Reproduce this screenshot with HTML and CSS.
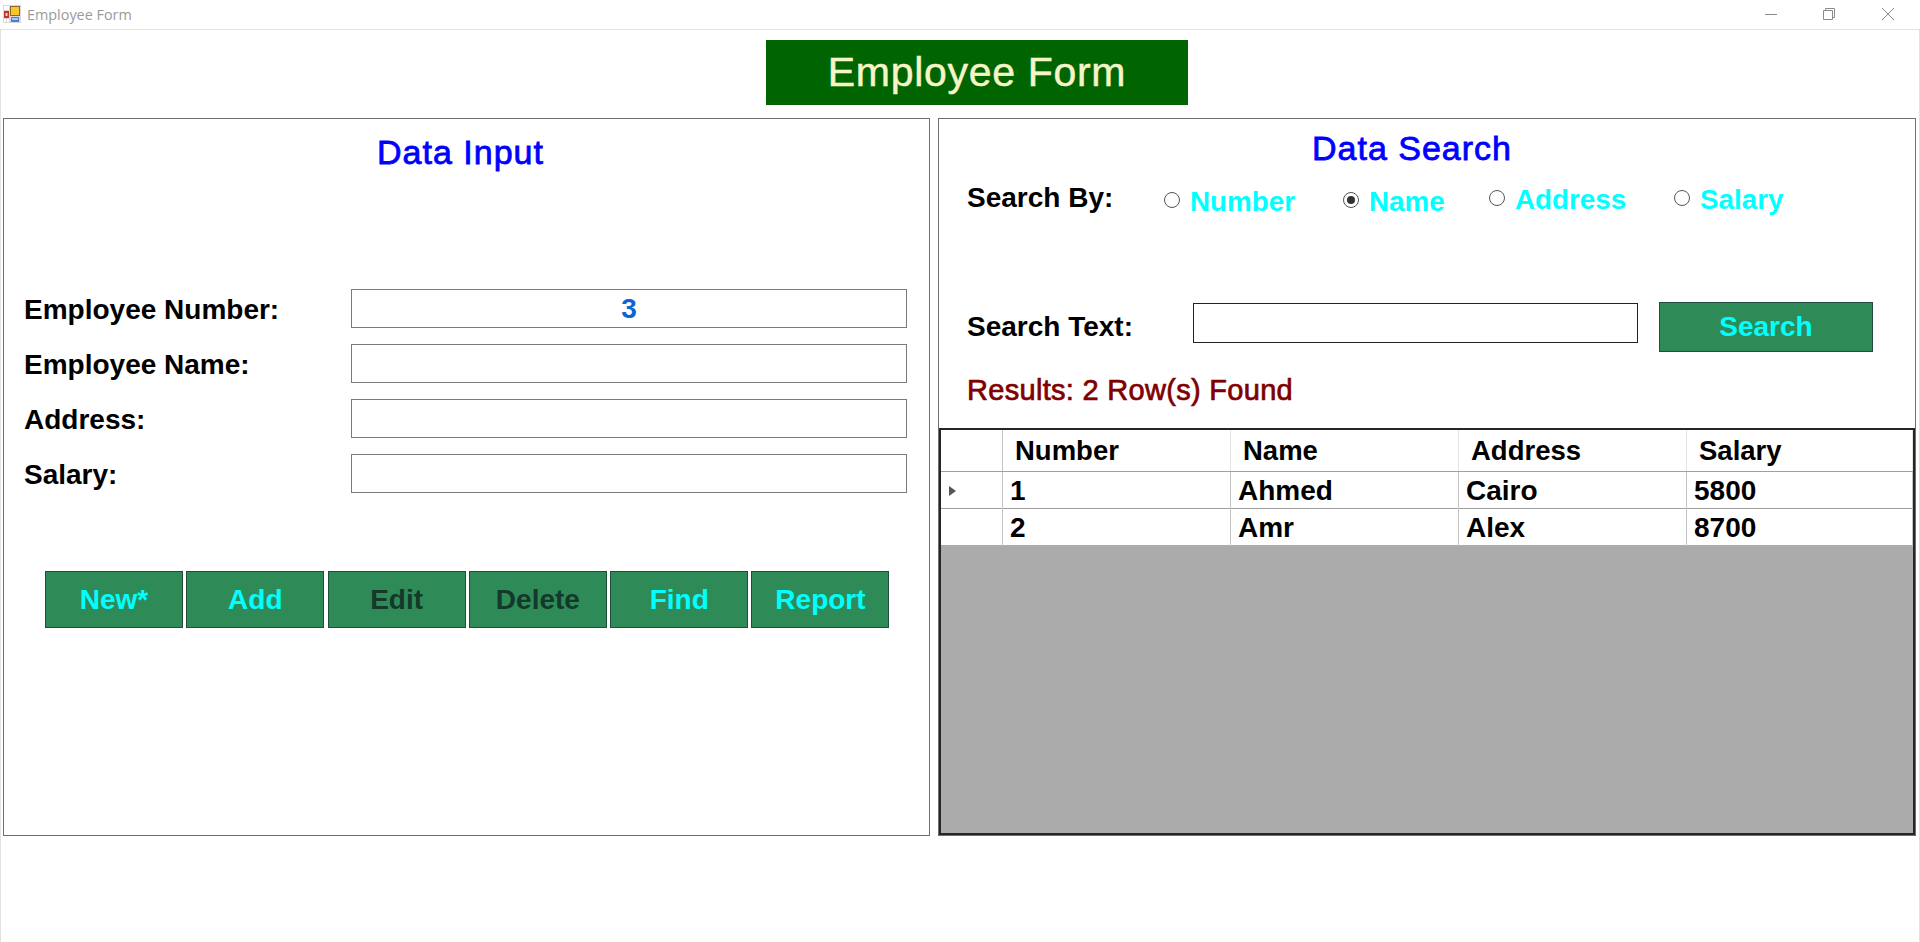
FILE: index.html
```html
<!DOCTYPE html>
<html lang="en">
<head>
<meta charset="utf-8">
<title>Employee Form</title>
<link rel="stylesheet" href="styles.css">
</head>
<body>
<div class="window">
  <header class="titlebar">
    <svg class="app-icon" width="18" height="18" viewBox="0 0 18 18">
      <rect width="18" height="18" fill="#d8d8d8"/>
      <rect x="1" y="1" width="5" height="4" fill="#fff"/>
      <rect x="1" y="6" width="5" height="7" fill="#c8302a"/>
      <rect x="2.500" y="8" width="2" height="3" fill="#f4d0c8"/>
      <rect x="1" y="14" width="2" height="3" fill="#fff"/>
      <rect x="4" y="14" width="2" height="3" fill="#fff"/>
      <rect x="7" y="1" width="10" height="10" fill="#8a6a20"/>
      <rect x="8" y="2" width="8" height="8" fill="#f6c72e"/>
      <rect x="8" y="12" width="8" height="5" fill="#4a7fd4"/>
      <rect x="9" y="13" width="6" height="2" fill="#a9c8f2"/>
    </svg>
    <span class="app-title">Employee Form</span>
    <div class="win-controls">
      <svg class="win-icon" width="14" height="14" viewBox="0 0 14 14"><path d="M1 7.500H13" stroke="#8a8a8a" fill="none"/></svg>
      <svg class="win-icon" width="14" height="14" viewBox="0 0 14 14"><path d="M1.500 3.500H10.500V12.500H1.500ZM3.500 3.500V1.500H12.500V10.500H10.500" stroke="#8a8a8a" fill="none"/></svg>
      <svg class="win-icon" width="14" height="14" viewBox="0 0 14 14"><path d="M1 1L13 13M13 1L1 13" stroke="#8a8a8a" fill="none"/></svg>
    </div>
  </header>

  <main class="client">
    <div class="banner-row"><h1 class="banner">Employee Form</h1></div>

    <div class="panels">
      <section class="panel panel-input">
        <h2 class="panel-title input-title">Data Input</h2>
        <div class="fields">
          <label class="field-label">Employee Number:</label>
          <div class="field-box field-number">3</div>
          <label class="field-label">Employee Name:</label>
          <div class="field-box"></div>
          <label class="field-label">Address:</label>
          <div class="field-box"></div>
          <label class="field-label">Salary:</label>
          <div class="field-box"></div>
        </div>
        <div class="actions">
          <button class="btn">New*</button>
          <button class="btn">Add</button>
          <button class="btn btn-off">Edit</button>
          <button class="btn btn-off">Delete</button>
          <button class="btn">Find</button>
          <button class="btn">Report</button>
        </div>
      </section>

      <section class="panel panel-search">
        <h2 class="panel-title search-title">Data Search</h2>
        <div class="search-by">
          <span class="field-label search-by-label">Search By:</span>
          <span class="radio r-number"><i class="dot"></i><span class="radio-text">Number</span></span>
          <span class="radio r-name"><i class="dot dot-on"></i><span class="radio-text">Name</span></span>
          <span class="radio r-address"><i class="dot"></i><span class="radio-text">Address</span></span>
          <span class="radio r-salary"><i class="dot"></i><span class="radio-text">Salary</span></span>
        </div>
        <div class="search-line">
          <span class="field-label search-text-label">Search Text:</span>
          <div class="search-box"></div>
          <button class="btn btn-search">Search</button>
        </div>
        <p class="results">Results: 2 Row(s) Found</p>
        <div class="grid">
          <div class="grid-row grid-head">
            <div class="cell-head"></div>
            <div class="cell hcell">Number</div>
            <div class="cell hcell">Name</div>
            <div class="cell hcell">Address</div>
            <div class="cell hcell">Salary</div>
          </div>
          <div class="grid-row grid-body">
            <div class="cell-head"><i class="caret"></i></div>
            <div class="cell">1</div>
            <div class="cell">Ahmed</div>
            <div class="cell">Cairo</div>
            <div class="cell">5800</div>
          </div>
          <div class="grid-row grid-body">
            <div class="cell-head"></div>
            <div class="cell">2</div>
            <div class="cell">Amr</div>
            <div class="cell">Alex</div>
            <div class="cell">8700</div>
          </div>
        </div>
      </section>
    </div>
  </main>
</div>
</body>
</html>
```

FILE: styles.css
```css
* { box-sizing: border-box; }
html, body { margin: 0; height: 100%; background: #fff; overflow: hidden; }
body { font-family: "Liberation Sans", Arial, sans-serif; color: #000; }

.window { height: 942px; display: flex; flex-direction: column; }

.titlebar {
  height: 30px;
  display: flex;
  align-items: center;
  padding: 0 0 0 3px;
  border-bottom: 1px solid #e2e2e2;
  flex: none;
}
.app-icon { flex: none; margin-top: -1px; }
.app-title {
  font-family: "Open Sans", "Noto Sans", sans-serif;
  font-size: 14.400px;
  color: #9a9a9a;
  margin-left: 6px;
}
.win-controls { margin-left: auto; display: flex; margin-top: -2px; }
.win-icon { width: 14px; height: 14px; margin-right: 44px; }
.win-controls .win-icon:nth-child(2) { margin-right: 45px; }
.win-controls .win-icon:last-child { margin-right: 25px; }

.client {
  flex: 1;
  border-left: 1px solid #e2e2e2;
  border-right: 1px solid #e2e2e2;
  padding: 0 3px 0 2px;
}

.banner-row { display: flex; padding: 10px 0 13px 763px; }
.banner {
  margin: 0;
  width: 422px;
  height: 65px;
  background: #006400;
  color: #f5f5c8;
  font-weight: 400;
  font-size: 41px;
  letter-spacing: 0.700px;
  -webkit-text-stroke: 0.5px #f5f5c8;
  line-height: 65px;
  text-align: center;
}

.panels { display: flex; gap: 8px; }
.panel { height: 718px; border: 1px solid #6e6e6e; position: relative; }
.panel-input { width: 927px; flex: none; }
.panel-search { flex: 1; }

.panel-title {
  margin: 0;
  color: #0000ff;
  font-weight: 400;
  -webkit-text-stroke: 0.8px #0000ff;
  font-size: 34px;
  letter-spacing: 1px;
  line-height: 40px;
  text-align: center;
}
.input-title { padding: 13px 12px 1px 0; }
.search-title { padding: 9px 30px 0 0; }

.field-label { font-size: 28px; font-weight: 700; line-height: 30px; }
.fields .field-label { padding-top: 2px; }

.fields {
  display: grid;
  grid-template-columns: 327px 556px;
  grid-auto-rows: 39px;
  row-gap: 16px;
  align-items: center;
  padding: 116px 0 0 20px;
}
.field-box { height: 39px; border: 1px solid #7a7a7a; background: #fff; }
.field-number {
  font-size: 28px;
  font-weight: 700;
  color: #0a66d8;
  text-align: center;
  line-height: 37px;
}

.actions {
  display: flex;
  gap: 3.300px;
  padding: 78px 0 0 41px;
}
.btn {
  width: 138px;
  height: 57px;
  padding: 0;
  font-family: inherit;
  font-size: 28px;
  font-weight: 700;
  color: #00ffff;
  background: #2e8b57;
  border: 1px solid #1f4f38;
  border-radius: 0;
}
.btn-off { color: #14382a; }

.search-by { position: relative; height: 44px; margin-top: 8px; padding-left: 28px; }
.search-by-label { display: block; line-height: 44px; }
.radio {
  position: absolute;
  top: 0;
  display: flex;
  align-items: center;
  gap: 10px;
  height: 44px;
  color: #00ffff;
  font-size: 27.800px;
  font-weight: 700;
}
.radio-text { padding-top: 3px; }
.r-number { left: 225px; top: 2px; }
.r-name { left: 404px; top: 2px; }
.r-address { left: 550px; }
.r-salary { left: 735px; }
.dot {
  display: block;
  width: 16px;
  height: 16px;
  border-radius: 50%;
  border: 1px solid #555;
  background: #fff;
  position: relative;
}
.dot-on::after {
  content: "";
  position: absolute;
  left: 3px;
  top: 3px;
  width: 8px;
  height: 8px;
  border-radius: 50%;
  background: #333;
}

.search-line {
  display: flex;
  align-items: center;
  margin-top: 82px;
  padding-left: 28px;
}
.search-text-label { width: 226px; flex: none; }
.search-box { width: 445px; height: 40px; border: 1px solid #222; flex: none; margin-bottom: 9px; }
.btn-search {
  width: 214px;
  height: 50px;
  margin-left: 21px;
  border-color: #1f4f38;
}

.results {
  margin: 18px 0 0 28px;
  color: #800000;
  font-size: 29px;
  letter-spacing: 0.300px;
  font-weight: 400;
  -webkit-text-stroke: 0.7px #800000;
  line-height: 40px;
}

.grid {
  position: absolute;
  left: 0;
  right: 0;
  bottom: 0;
  top: 309px;
  background: #ababab;
  border: 2px solid #262626;
}
.grid-row {
  display: grid;
  grid-template-columns: 62px 228px 228px 228px 1fr;
  background: #fff;
}
.grid-head { height: 42px; border-bottom: 1px solid #a0a0a0; }
.grid-body { height: 37px; border-bottom: 1px solid #a0a0a0; }
.grid-body:last-child { height: 36px; border-bottom: 0; }
.cell-head { border-right: 1px solid #c4c4c4; display: flex; align-items: center; padding-left: 8px; }
.cell {
  border-right: 1px solid #c4c4c4;
  font-size: 28px;
  font-weight: 700;
  line-height: 37px;
  padding-left: 7px;
  white-space: nowrap;
}
.hcell { line-height: 41px; padding-left: 12px; border-right-color: #e4e4e4; font-size: 27.500px; }
.caret {
  display: block;
  width: 0;
  height: 0;
  border-left: 7px solid #555;
  border-top: 5px solid transparent;
  border-bottom: 5px solid transparent;
}
```
